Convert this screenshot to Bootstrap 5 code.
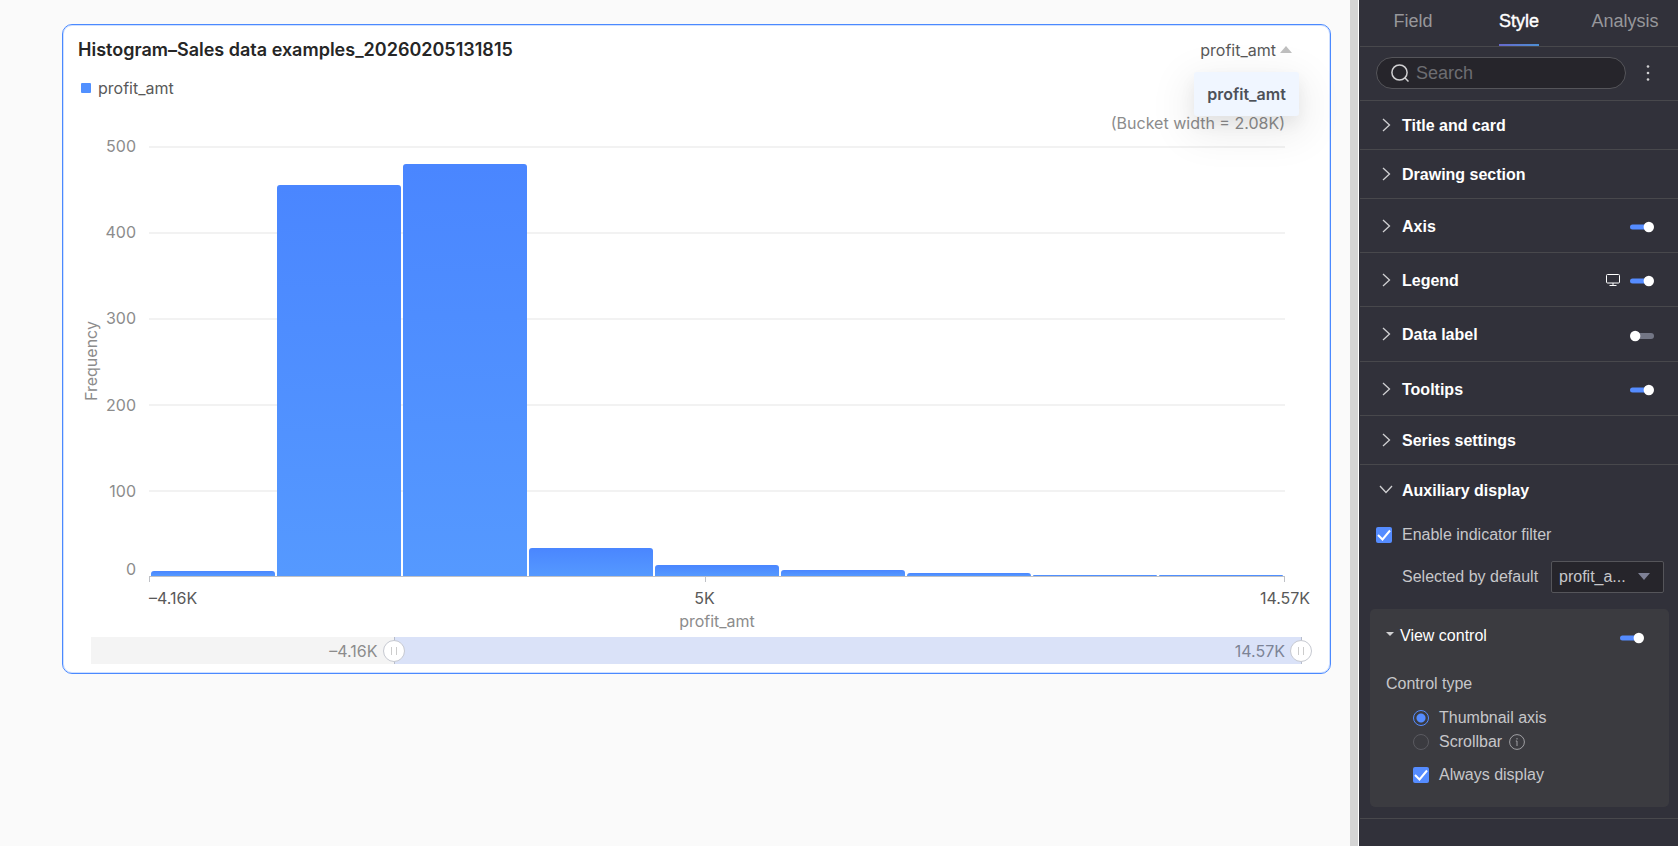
<!DOCTYPE html>
<html lang="en">
<head>
<meta charset="utf-8">
<meta name="viewport" content="width=device-width, initial-scale=1">
<title>Histogram editor</title>
<link href="https://cdn.jsdelivr.net/npm/bootstrap@5.3.0/dist/css/bootstrap.min.css" rel="stylesheet">
<style>
  body { background: #fafafa; font-family: Inter, "Noto Sans", sans-serif; font-size: 16px; line-height: 24px; color: #595959; }
  button { font: inherit; color: inherit; }

  /* canvas and chart card */
  .canvas { padding: 24px 19px 24px 62px; }
  .chart-card { background: #fff; border: 1px solid #4a89ff; border-radius: 10px; box-shadow: inset 0 0 0 1px #cfe0ff; padding-bottom: 9px; }
  .chart-head { height: 49px; padding: 0 38px 0 15px; }
  .chart-title { font-size: 18px; line-height: 24px; font-weight: 600; color: #262626; }
  .measure-menu { top: 34px; right: -7px; z-index: 3; background: #f0f6ff; border-radius: 3px; width: 105px; height: 44px; font-weight: 600; color: #4d5158; box-shadow: 0 12px 40px 8px rgba(0,0,0,.07), 0 8px 16px rgba(0,0,0,.06); }
  .legend-row { height: 28px; padding-left: 18px; gap: 7px; }
  .legend-key { width: 10px; height: 10px; background: #5190ff; border-radius: 1px; }
  .bucket-note { margin: 9px 45px 11px 0; color: #8c8c8c; }
  .axis-muted { color: #8c8c8c; }
  .plot-row { height: 431px; padding: 0 45px 0 16px; }
  .y-title { width: 24px; writing-mode: vertical-rl; transform: rotate(180deg); }
  .y-scale { width: 33px; margin-right: 13px; line-height: 20px; }
  .y-step { flex: 1 1 0; }
  .y-step span { margin-top: -10px; }
  .y-step .y-zero { margin-top: 0; margin-bottom: -2px; }
  .plot { border-bottom: 1px solid #bfc1c6; }
  .grid-lines { inset: 0; }
  .grid-lines i { flex: 1 1 0; border-top: 2px solid #f2f2f2; }
  .bars { padding: 0 1px; }
  .bar-slot { flex: 1 1 0; padding: 0 1px; }
  .bar-fill { background: linear-gradient(#4a86ff, #5599ff); border-radius: 3px 3px 0 0; }
  .x-scale { margin: 0 45px 0 86px; height: 32px; }
  .x-tick { top: 0; width: 1px; height: 5px; background: #bfc1c6; }
  .x-label { top: 9px; }
  .x-title { margin-right: 45px; margin-left: 86px; line-height: 24px; }
  .range-bar { margin: 4px 29px 0 28px; height: 27px; background: #f4f4f4; }
  .range-window { background: #dae2f8; color: #7d8496; }
  .range-end { padding-right: 16px; }
  .range-handle { top: 3px; width: 22px; height: 22px; margin-left: -11px; border: 1px solid #c6c9d1; border-radius: 50%; background: #fff; z-index: 1; }
  .range-edge { top: 0; bottom: 0; width: 1px; background: #b8bdcb; }

  /* settings panel */
  .side-wrap { width: 328px; border-left: 8px solid #d4d4d4; }
  .side-panel { width: 100%; border-left: 1px solid #fff; padding-left: 1px; background: #31313a; color: #c7c7ca; font-family: "Liberation Sans", Arial, sans-serif; line-height: 20px; }
  .line-b { border-bottom: 1px solid #48484c; }
  .side-tabs { height: 47px; font-size: 18px; }
  .side-tabs a { color: #97979b; text-decoration: none; flex: 1 1 0; height: 46px; }
  .side-tabs span { padding-top: 11px; height: 46px; }
  .side-tabs .current { color: #fff; -webkit-text-stroke: 0.4px #fff; border-bottom: 2px solid; border-image: linear-gradient(90deg, #6868cc, #4c90d4) 1; }
  .search-row { height: 54px; padding: 0 20px 2px 16px; }
  .search-box { width: 250px; height: 32px; border: 1px solid #55555a; border-radius: 16px; background: #26252b; padding: 0 14px; gap: 7px; }
  .search-box input { border: 0; outline: 0; background: none; color: #fff; font-size: 18px; width: 100%; padding: 0; }
  .search-box input::placeholder { color: #6d6d72; opacity: 1; }
  .sec { height: 49px; padding: 0 24px 0 16px; }
  .sec-tall { height: 54px; }
  .sec-taller { height: 55px; }
  .sec button, .plain { background: none; border: 0; padding: 0; }
  .sec-name { color: #fff; font-weight: 700; padding-top: 2px; }
  .chev { width: 20px; margin-right: 6px; }
  .toggle { appearance: none; width: 24px; height: 12px; margin: 3px 0 0; background: url("data:image/svg+xml,%3Csvg xmlns='http://www.w3.org/2000/svg' viewBox='0 0 24 12'%3E%3Crect y='3.500' width='22' height='5' rx='2.500' fill='%23558cff'/%3E%3Ccircle cx='18.800' cy='6' r='5.200' fill='%23fff'/%3E%3C/svg%3E") no-repeat; }
  .toggle:not(:checked) { background-image: url("data:image/svg+xml,%3Csvg xmlns='http://www.w3.org/2000/svg' viewBox='0 0 24 12'%3E%3Crect x='2' y='3' width='22' height='6' rx='3' fill='%23737685'/%3E%3Ccircle cx='5.200' cy='6' r='5.200' fill='%23fff'/%3E%3C/svg%3E"); }
  .side-panel .form-check-input { width: 16px; height: 16px; margin: 0; float: none; background-color: transparent; border-color: #5a5a60; box-shadow: none; }
  .side-panel .form-check-input[type=checkbox] { border: 0; border-radius: 2px; }
  .side-panel .form-check-input[type=checkbox]:checked { background-color: #558cff; background-image: url("data:image/svg+xml,%3Csvg xmlns='http://www.w3.org/2000/svg' viewBox='0 0 16 16'%3E%3Cpath d='M2 8l4.500 4.500L14 3.500' fill='none' stroke='%23fff' stroke-width='2'/%3E%3C/svg%3E"); }
  .side-panel .form-check-input[type=radio]:checked { border-color: #558cff; background: radial-gradient(circle, #558cff 4px, transparent 5px); }
  .opt-row { gap: 10px; }
  .filter-row { margin: 11px 16px 0; }
  .default-row { margin: 16px 14px 16px 42px; }
  .pick { appearance: none; width: 113px; height: 32px; border: 1px solid #55555a; border-radius: 2px; background: #26252b; color: #c7c7ca; padding: 0 7px; }
  .pick-caret { right: 14px; top: 12px; pointer-events: none; }
  .view-box { margin: 0 9px 11px 10px; padding: 17px 25px 22px 16px; background: #3b3b40; border-radius: 5px; }
  .view-name { color: #fff; margin-left: 6px; }
  .type-name { margin-top: 28px; }
  .type-list { margin: 14px 0 0 27px; }
  .always-row { margin-top: 13px; }
  .screen-icon { margin-right: 10px; }
  .info-dot { margin-left: -3px; }
</style>
</head>
<body>
<div class="d-flex min-vh-100">
  <main class="canvas flex-grow-1">
    <section class="chart-card">
      <header class="chart-head d-flex align-items-center justify-content-between">
        <h1 class="chart-title mb-0">Histogram–Sales data examples_20260205131815</h1>
        <div class="position-relative">
          <button type="button" class="plain d-flex align-items-center gap-1" aria-expanded="true">profit_amt
            <svg width="12" height="7" viewBox="0 0 12 7" aria-hidden="true"><path d="M6 0l6 7H0z" fill="#bfbfbf"/></svg></button>
          <button type="button" class="measure-menu position-absolute border-0 p-0">profit_amt</button>
        </div>
      </header>
      <div class="legend-row d-flex align-items-center">
        <span class="legend-key"></span><span>profit_amt</span>
      </div>
      <div class="bucket-note text-end">(Bucket width = 2.08K)</div>
      <div class="plot-row d-flex axis-muted">
        <div class="y-title text-center">Frequency</div>
        <div class="y-scale d-flex flex-column text-end">
          <div class="y-step"><span class="d-block">500</span></div>
          <div class="y-step"><span class="d-block">400</span></div>
          <div class="y-step"><span class="d-block">300</span></div>
          <div class="y-step"><span class="d-block">200</span></div>
          <div class="y-step d-flex flex-column justify-content-between"><span>100</span><span class="y-zero">0</span></div>
        </div>
        <div class="plot position-relative flex-grow-1">
          <div class="grid-lines position-absolute d-flex flex-column"><i></i><i></i><i></i><i></i><i></i></div>
          <div class="bars position-relative d-flex align-items-end h-100">
            <div class="bar-slot h-100 d-flex align-items-end"><div class="bar-fill w-100" style="height:1.1%"></div></div>
            <div class="bar-slot h-100 d-flex align-items-end"><div class="bar-fill w-100" style="height:91%"></div></div>
            <div class="bar-slot h-100 d-flex align-items-end"><div class="bar-fill w-100" style="height:95.8%"></div></div>
            <div class="bar-slot h-100 d-flex align-items-end"><div class="bar-fill w-100" style="height:6.4%"></div></div>
            <div class="bar-slot h-100 d-flex align-items-end"><div class="bar-fill w-100" style="height:2.6%"></div></div>
            <div class="bar-slot h-100 d-flex align-items-end"><div class="bar-fill w-100" style="height:1.4%"></div></div>
            <div class="bar-slot h-100 d-flex align-items-end"><div class="bar-fill w-100" style="height:0.6%"></div></div>
            <div class="bar-slot h-100 d-flex align-items-end"><div class="bar-fill w-100" style="height:0.25%"></div></div>
            <div class="bar-slot h-100 d-flex align-items-end"><div class="bar-fill w-100" style="height:0.25%"></div></div>
          </div>
        </div>
      </div>
      <div class="x-scale position-relative">
        <i class="x-tick position-absolute start-0"></i>
        <i class="x-tick position-absolute" style="left:48.9%"></i>
        <i class="x-tick position-absolute end-0"></i>
        <span class="x-label position-absolute start-0">–4.16K</span>
        <span class="x-label position-absolute translate-middle-x" style="left:48.9%">5K</span>
        <span class="x-label position-absolute translate-middle-x start-100">14.57K</span>
      </div>
      <div class="x-title axis-muted text-center">profit_amt</div>
      <div class="range-bar position-relative d-flex align-items-center axis-muted">
        <div class="range-end text-end" style="width:25%">–4.16K</div>
        <div class="range-window range-end flex-grow-1 h-100 d-flex align-items-center justify-content-end">14.57K</div>
        <i class="range-edge position-absolute" style="left:25%"></i>
        <i class="range-edge position-absolute start-100"></i>
        <button type="button" class="range-handle position-absolute p-0 d-flex align-items-center justify-content-center" style="left:25%" aria-label="Range start"><svg width="6" height="8" viewBox="0 0 6 8"><path d="M.5 0v8M5.500 0v8" stroke="#ccc"/></svg></button>
        <button type="button" class="range-handle position-absolute p-0 d-flex align-items-center justify-content-center start-100" aria-label="Range end"><svg width="6" height="8" viewBox="0 0 6 8"><path d="M.5 0v8M5.500 0v8" stroke="#ccc"/></svg></button>
      </div>
    </section>
  </main>

  <aside class="side-wrap flex-shrink-0 d-flex">
    <div class="side-panel">
      <nav class="side-tabs line-b d-flex">
        <a href="#" class="d-flex justify-content-center"><span>Field</span></a>
        <a href="#" class="d-flex justify-content-center"><span class="current">Style</span></a>
        <a href="#" class="d-flex justify-content-center"><span>Analysis</span></a>
      </nav>
      <div class="search-row line-b d-flex align-items-center justify-content-between">
        <label class="search-box d-flex align-items-center">
          <svg class="flex-shrink-0" width="18" height="18" viewBox="0 0 18 18" fill="none" stroke="#d0d0d2" stroke-width="1.500"><circle cx="8.500" cy="8.500" r="7.600"/><path d="M13.800 13.800l3.700 3.700"/></svg>
          <input type="text" placeholder="Search" aria-label="Search">
        </label>
        <button type="button" class="plain d-flex px-2" aria-label="More"><svg width="4" height="16" viewBox="0 0 4 16" fill="#d0d0d2"><circle cx="2" cy="1.500" r="1.300"/><circle cx="2" cy="8" r="1.300"/><circle cx="2" cy="14.500" r="1.300"/></svg></button>
      </div>

      <div class="sec line-b d-flex align-items-center"><button type="button" class="d-flex align-items-center"><svg class="chev" height="14" viewBox="0 0 20 14" fill="none" stroke="#d0d0d2" stroke-width="1.300"><path d="M7 1l6.500 6L7 13"/></svg><span class="sec-name">Title and card</span></button></div>
      <div class="sec line-b d-flex align-items-center"><button type="button" class="d-flex align-items-center"><svg class="chev" height="14" viewBox="0 0 20 14" fill="none" stroke="#d0d0d2" stroke-width="1.300"><path d="M7 1l6.500 6L7 13"/></svg><span class="sec-name">Drawing section</span></button></div>
      <div class="sec sec-tall line-b d-flex align-items-center justify-content-between"><button type="button" class="d-flex align-items-center"><svg class="chev" height="14" viewBox="0 0 20 14" fill="none" stroke="#d0d0d2" stroke-width="1.300"><path d="M7 1l6.500 6L7 13"/></svg><span class="sec-name">Axis</span></button><input class="toggle" type="checkbox" role="switch" aria-label="Axis" checked></div>
      <div class="sec sec-tall line-b d-flex align-items-center"><button type="button" class="d-flex align-items-center me-auto"><svg class="chev" height="14" viewBox="0 0 20 14" fill="none" stroke="#d0d0d2" stroke-width="1.300"><path d="M7 1l6.500 6L7 13"/></svg><span class="sec-name">Legend</span></button>
        <svg class="screen-icon" width="14" height="12" viewBox="0 0 14 12" fill="none" stroke="#fff"><rect x=".5" y=".5" width="13" height="8.500" rx="1"/><path d="M7 9v2.500M3.500 11.500h7"/></svg>
        <input class="toggle" type="checkbox" role="switch" aria-label="Legend" checked></div>
      <div class="sec sec-taller line-b d-flex align-items-center justify-content-between"><button type="button" class="d-flex align-items-center"><svg class="chev" height="14" viewBox="0 0 20 14" fill="none" stroke="#d0d0d2" stroke-width="1.300"><path d="M7 1l6.500 6L7 13"/></svg><span class="sec-name">Data label</span></button><input class="toggle" type="checkbox" role="switch" aria-label="Data label"></div>
      <div class="sec sec-tall line-b d-flex align-items-center justify-content-between"><button type="button" class="d-flex align-items-center"><svg class="chev" height="14" viewBox="0 0 20 14" fill="none" stroke="#d0d0d2" stroke-width="1.300"><path d="M7 1l6.500 6L7 13"/></svg><span class="sec-name">Tooltips</span></button><input class="toggle" type="checkbox" role="switch" aria-label="Tooltips" checked></div>
      <div class="sec line-b d-flex align-items-center"><button type="button" class="d-flex align-items-center"><svg class="chev" height="14" viewBox="0 0 20 14" fill="none" stroke="#d0d0d2" stroke-width="1.300"><path d="M7 1l6.500 6L7 13"/></svg><span class="sec-name">Series settings</span></button></div>

      <div class="line-b">
        <div class="sec d-flex align-items-center"><button type="button" class="d-flex align-items-center" aria-expanded="true"><svg class="chev" height="14" viewBox="0 0 20 14" fill="none" stroke="#d0d0d2" stroke-width="1.300"><path d="M4 3l6 6.500L16 3"/></svg><span class="sec-name">Auxiliary display</span></button></div>
        <div class="filter-row opt-row d-flex align-items-center"><input class="form-check-input" type="checkbox" id="filter" checked><label for="filter">Enable indicator filter</label></div>
        <div class="default-row d-flex align-items-center justify-content-between">
          <label for="measure">Selected by default</label>
          <div class="position-relative"><select class="pick" id="measure"><option>profit_a...</option></select><svg class="pick-caret position-absolute" width="12" height="8" viewBox="0 0 12 8"><path d="M0 0h12L6 7z" fill="#7e8196"/></svg></div>
        </div>
        <div class="view-box">
          <div class="d-flex align-items-center justify-content-between">
            <button type="button" class="plain d-flex align-items-center" aria-expanded="true"><svg width="8" height="10" viewBox="0 0 8 10"><path d="M0 1h8L4 5z" fill="#d0d0d2"/></svg><span class="view-name">View control</span></button>
            <input class="toggle" type="checkbox" role="switch" aria-label="View control" checked>
          </div>
          <div class="type-name">Control type</div>
          <div class="type-list">
            <div class="opt-row d-flex align-items-center"><input class="form-check-input" type="radio" name="ctype" id="thumb" checked><label for="thumb">Thumbnail axis</label></div>
            <div class="opt-row d-flex align-items-center mt-1"><input class="form-check-input" type="radio" name="ctype" id="scroll"><label for="scroll">Scrollbar</label><svg class="info-dot" width="16" height="16" viewBox="0 0 16 16" fill="none" stroke="#a0a0a4"><circle cx="8" cy="8" r="7.400"/><path d="M8 4v1.500M8 7v5M6.800 7H8" /></svg></div>
            <div class="opt-row always-row d-flex align-items-center"><input class="form-check-input" type="checkbox" id="always" checked><label for="always">Always display</label></div>
          </div>
        </div>
      </div>
    </div>
  </aside>
</div>
<script src="https://cdn.jsdelivr.net/npm/bootstrap@5.3.0/dist/js/bootstrap.bundle.min.js"></script>
</body>
</html>
